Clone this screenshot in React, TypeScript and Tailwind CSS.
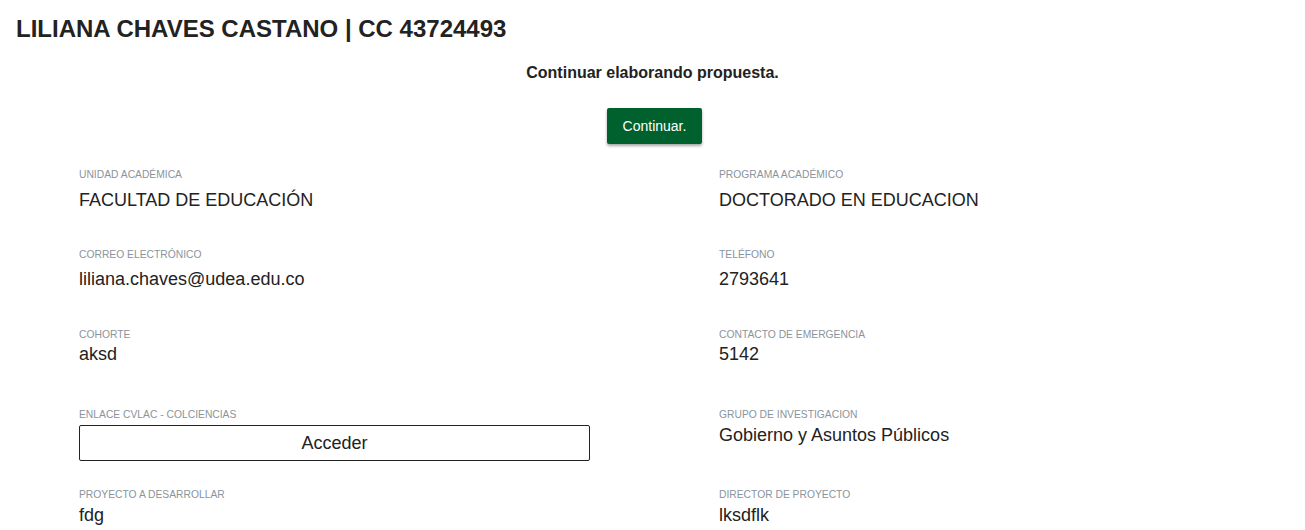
import React from "react";

function Field({ label, value, mt }: { label: string; value: React.ReactNode; mt: string }) {
  return (
    <div className="h-[80px]">
      <div className="text-[10.3px] leading-[12px] uppercase text-[#8a949c]">{label}</div>
      <div className={`text-[18px] leading-[24px] text-[#222] ${mt}`}>{value}</div>
    </div>
  );
}

export default function App() {
  return (
    <div className="w-[1305px] h-[530px] bg-white overflow-hidden" style={{ fontFamily: '"Liberation Sans", Arial, sans-serif' }}>
      <h1 className="pl-[16px] pt-[15px] text-[24px] leading-[28px] font-bold text-[#222]">
        LILIANA CHAVES CASTANO | CC 43724493
      </h1>
      <div className="mt-[20px] text-center text-[16px] leading-[20px] font-bold text-[#222]">
        Continuar elaborando propuesta.
      </div>
      <div className="mt-[25px] flex justify-center">
        <button className="ml-[4px] h-[36px] w-[95px] rounded-[2px] bg-[#00612e] text-[14px] text-white shadow-[0_2px_3px_rgba(0,0,0,0.35)]">
          Continuar.
        </button>
      </div>
      <div className="mt-[25px] pl-[79px] grid grid-cols-[640px_640px]">
        <Field label="Unidad Académica" value="FACULTAD DE EDUCACIÓN" mt="mt-[7px]" />
        <Field label="Programa Académico" value="DOCTORADO EN EDUCACION" mt="mt-[7px]" />
        <Field label="Correo Electrónico" value="liliana.chaves@udea.edu.co" mt="mt-[6px]" />
        <Field label="Teléfono" value="2793641" mt="mt-[6px]" />
        <Field label="Cohorte" value="aksd" mt="mt-[1px]" />
        <Field label="Contacto de Emergencia" value="5142" mt="mt-[1px]" />
        <div className="h-[80px]">
          <div className="text-[10.3px] leading-[12px] uppercase text-[#8a949c]">Enlace CVLAC - Colciencias</div>
          <button className="mt-[4px] h-[36px] w-[511px] rounded-[2px] border border-[#222] text-[18px] text-[#222]">
            Acceder
          </button>
        </div>
        <Field label="Grupo de Investigacion" value="Gobierno y Asuntos Públicos" mt="mt-[2px]" />
        <Field label="Proyecto a Desarrollar" value="fdg" mt="mt-[2px]" />
        <Field label="Director de Proyecto" value="lksdflk" mt="mt-[2px]" />
      </div>
    </div>
  );
}
